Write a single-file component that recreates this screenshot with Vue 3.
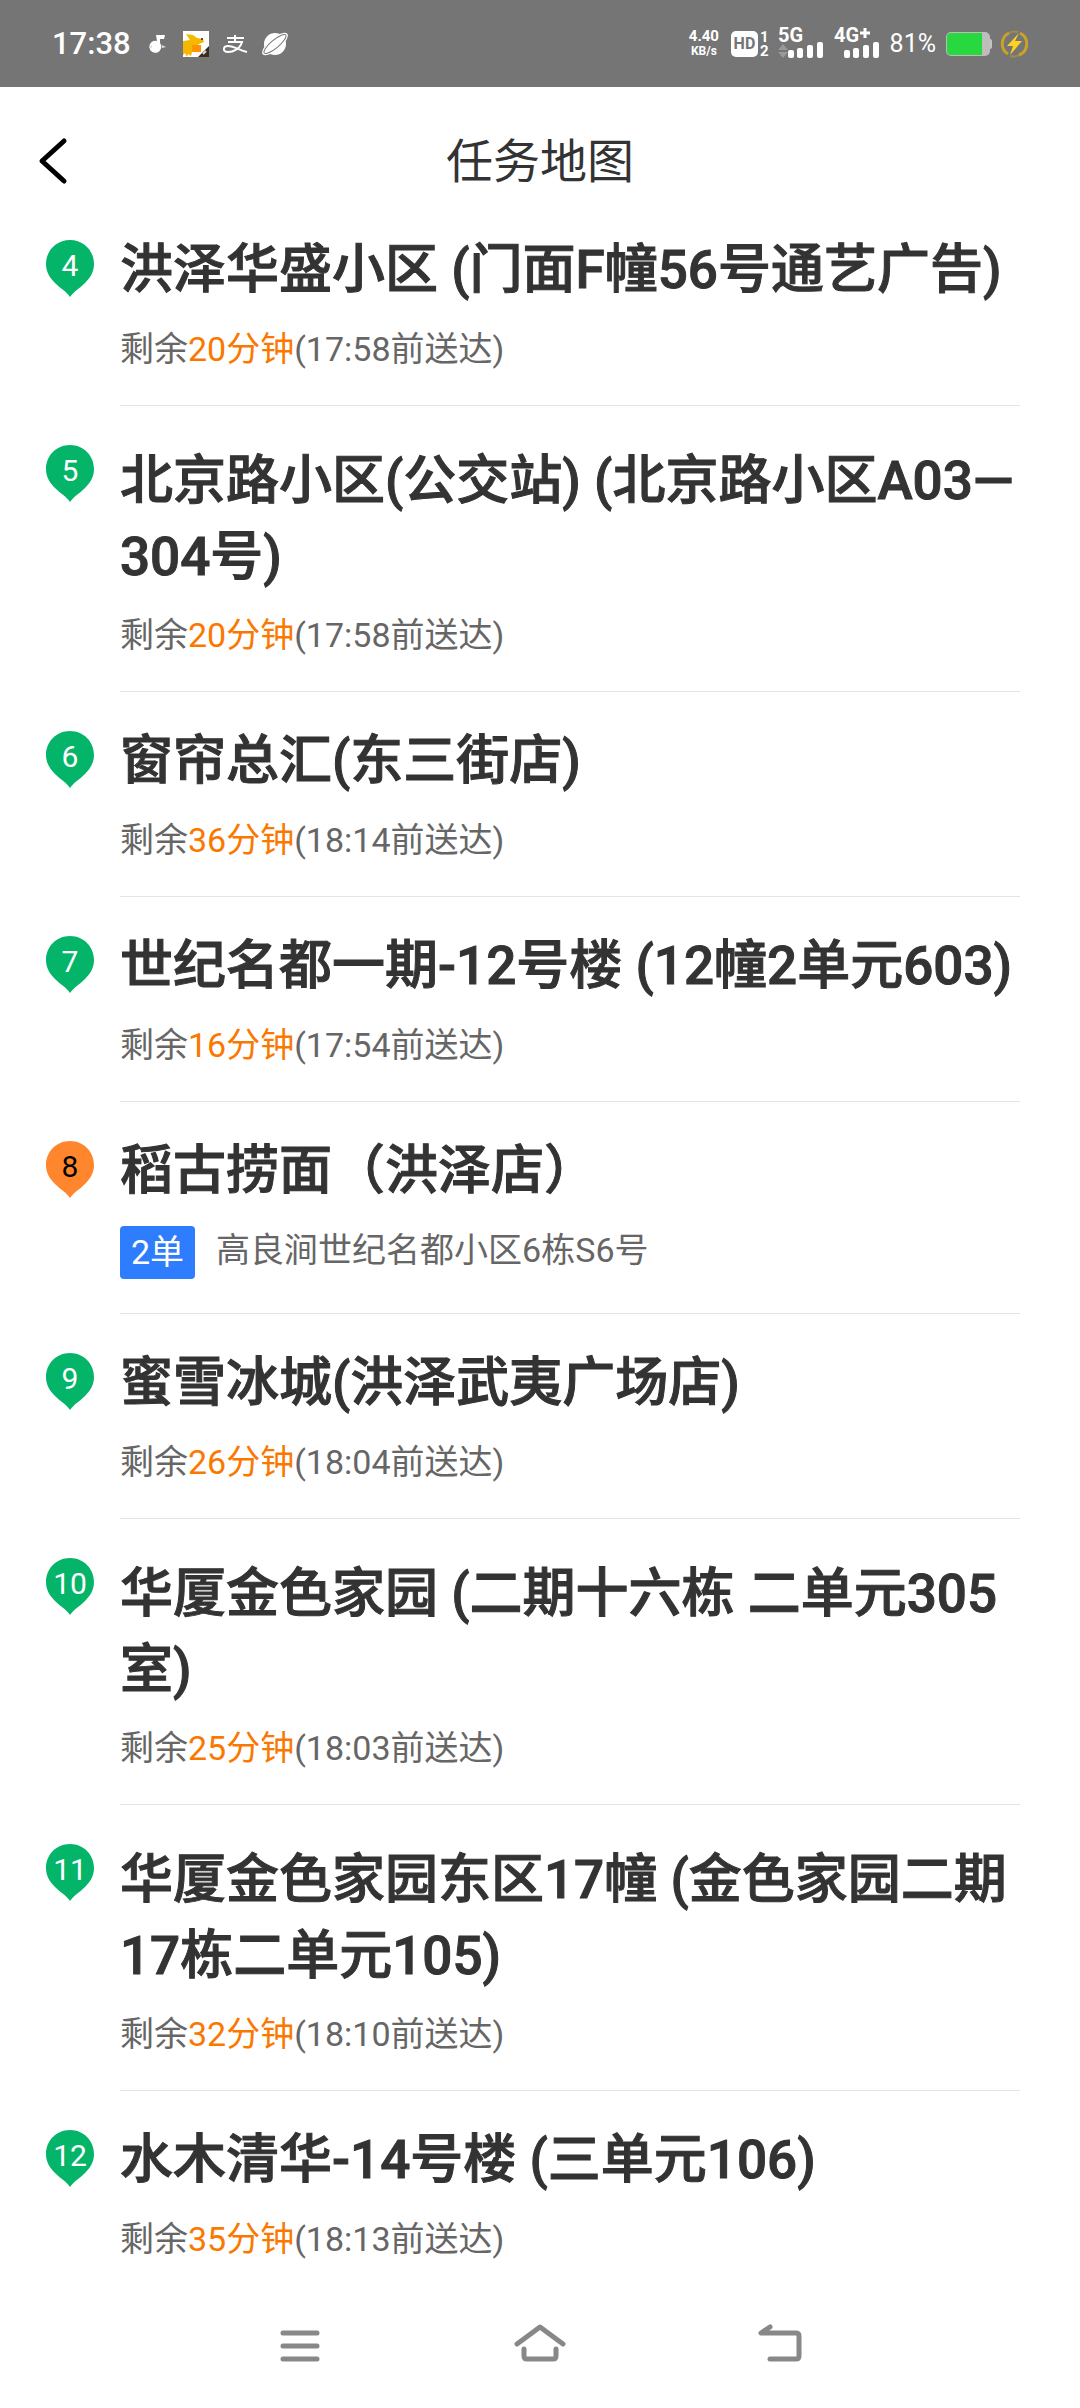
<template>
    <div class="page">
        <div class="status-bar">
            <div class="status-left">
                <span class="clock">17:38</span>
                <svg class="music-icon" width="18" height="20" viewBox="0 0 18 20">
                    <path d="M7 1h9l-1 4h-4v4a6 6 0 1 1-3-2z" fill="#fff" />
                    <path d="M0 13l3-2v3zM13 11l4 2-4 1z" fill="#ddd" />
                </svg>
                <svg class="app-icon" width="26" height="26" viewBox="0 0 26 26">
                    <rect width="26" height="26" fill="#fff" />
                    <path d="M0 10l7-1-4-6 7 1 4 3 6 1 1 3-5 2-3 3v4l-4 1-1 4-3-2-1 3-2-4-2 2z" fill="#f5b800" />
                    <path d="M9 14h9v7H9z" fill="#ff9300" />
                    <path d="M26 15v11H15z" fill="#3c2a1c" />
                    <path d="M20 23l3-3" stroke="#ddd" stroke-width="2" />
                    <circle cx="19" cy="8" r="1" fill="#222" />
                </svg>
                <svg class="pay-icon" width="26" height="20" viewBox="0 0 26 20" fill="none" stroke="#fff" stroke-width="2">
                    <path d="M4 4h17M12 1v7M5 8h14C17 15 10 18 5 18c-6 0-5-6 0-6 6 0 11 4 19 6" />
                </svg>
                <svg width="28" height="26" viewBox="0 0 28 26">
                    <circle cx="14" cy="13" r="11" fill="#fff" />
                    <ellipse cx="14" cy="13" rx="16" ry="6" transform="rotate(-40 14 13)" fill="#fff" />
                    <ellipse cx="14" cy="13" rx="14" ry="4" transform="rotate(-40 14 13)" fill="none" stroke="#757575" stroke-width="1" />
                </svg>
            </div>
            <div class="status-right">
                <div class="speed">
                    <span class="speed-value">4.40</span>
                    <span class="speed-unit">KB/s</span>
                </div>
                <div class="hd">
                    <span class="hd-box">HD</span>
                    <span class="hd-sims"><span>1</span><span>2</span></span>
                </div>
                <svg class="signal" width="46" height="46" viewBox="0 -6 46 46" fill="#fff">
                    <text class="signal-text" x="0" y="15">5G</text>
                    <path d="M0 23l5-6 5 6zM0 25h10l-5 6z" fill="#999" />
                    <rect v-for="bar in bars" :key="bar.x" :x="bar.x" :y="bar.y" width="6" :height="31 - bar.y" rx="2" />
                </svg>
                <svg class="signal" width="46" height="46" viewBox="0 -6 46 46" fill="#fff">
                    <text class="signal-text" x="0" y="15">4G</text>
                    <path d="M26 6h10M31 1v10" stroke="#fff" stroke-width="3" />
                    <rect v-for="bar in bars" :key="bar.x" :x="bar.x" :y="bar.y" width="6" :height="31 - bar.y" rx="2" />
                </svg>
                <span class="percent">81%</span>
                <svg class="battery" width="48" height="26" viewBox="0 0 48 26">
                    <path d="M43 8h2a2 2 0 0 1 2 2v6a2 2 0 0 1-2 2h-2z" fill="#c4c4c4" />
                    <rect x="1" y="1" width="44" height="24" rx="5" fill="#bdbdbd" />
                    <path d="M6 2h31v22H6a4 4 0 0 1-4-4V6a4 4 0 0 1 4-4z" fill="#27d93f" />
                </svg>
                <svg width="28" height="28" viewBox="0 0 28 28">
                    <path d="M9 3a12 12 0 0 0-1 21M19 25a12 12 0 0 0 1-22" fill="none" stroke="#c9a227" stroke-width="3" />
                    <path d="M9 3a12 12 0 0 1 9-1M10 26a12 12 0 0 0 9-1" fill="none" stroke="#a18b45" stroke-width="2" />
                    <path d="M19 3L7 16h6l-3 9 12-14h-7z" fill="#ffd21f" />
                </svg>
            </div>
        </div>

        <header class="header">
            <button class="back-button" type="button" aria-label="返回">
                <svg width="32" height="50" viewBox="0 0 32 50" fill="none" stroke="#000" stroke-width="5" stroke-linecap="round" stroke-linejoin="round">
                    <path d="M28 4L6 24l22 20" />
                </svg>
            </button>
            <h1 class="header-title">任务地图</h1>
        </header>

        <ul class="task-list">
            <li v-for="task in tasks" :key="task.no" class="task">
                <div class="pin" :class="{ pickup: task.count }">
                    <svg class="pin-shape" width="48" height="58" viewBox="0 0 48 58">
                        <path d="M24 0C10 0 0 11 0 24c0 8 4 14 9 19 6 6 11 8 15 14 4-6 9-8 15-14 5-5 9-11 9-19C48 11 38 0 24 0z" />
                    </svg>
                    <span class="pin-no">{{ task.no }}</span>
                </div>
                <div class="task-body">
                    <h2 class="task-title" :class="{ long: task.long }">{{ task.title }}</h2>
                    <div v-if="task.count" class="shop">
                        <span class="badge">{{ task.count }}单</span>
                        <span>{{ task.address }}</span>
                    </div>
                    <p v-else class="remain">剩余<span class="minutes">{{ task.left }}分钟</span>({{ task.time }}前送达)</p>
                </div>
            </li>
        </ul>

        <nav class="nav-bar">
            <button class="nav-button" type="button" aria-label="菜单">
                <svg width="52" height="44" viewBox="0 0 52 44">
                    <path d="M9 10h34M9 23h34M9 36h34" />
                </svg>
            </button>
            <button class="nav-button" type="button" aria-label="主页">
                <svg width="52" height="44" viewBox="0 0 52 44">
                    <path d="M3 21L26 4l23 17" />
                    <path d="M10 26v7q0 3 3 3h26q3 0 3-3v-7" />
                </svg>
            </button>
            <button class="nav-button" type="button" aria-label="返回上一页">
                <svg width="52" height="44" viewBox="0 0 52 44">
                    <path d="M16 4L7 10h35q3 0 3 3v20q0 3-3 3H16" />
                </svg>
            </button>
        </nav>
    </div>
</template>

<script setup>
const bars = [
    { x: 10, y: 23 },
    { x: 19, y: 21 },
    { x: 29, y: 18 },
    { x: 39, y: 15 },
];

// long: the title takes two lines
const tasks = [
    { no: 4, title: '洪泽华盛小区 (门面F幢56号通艺广告)', left: 20, time: '17:58' },
    { no: 5, title: '北京路小区(公交站) (北京路小区A03—304号)', left: 20, time: '17:58', long: true },
    { no: 6, title: '窗帘总汇(东三街店)', left: 36, time: '18:14' },
    { no: 7, title: '世纪名都一期-12号楼 (12幢2单元603)', left: 16, time: '17:54' },
    { no: 8, title: '稻古捞面（洪泽店）', count: 2, address: '高良涧世纪名都小区6栋S6号' },
    { no: 9, title: '蜜雪冰城(洪泽武夷广场店)', left: 26, time: '18:04' },
    { no: 10, title: '华厦金色家园 (二期十六栋 二单元305室)', left: 25, time: '18:03', long: true },
    { no: 11, title: '华厦金色家园东区17幢 (金色家园二期17栋二单元105)', left: 32, time: '18:10', long: true },
    { no: 12, title: '水木清华-14号楼 (三单元106)', left: 35, time: '18:13' },
];
</script>

<style>
body {
    background: #fff;
}
</style>

<style scoped>
.page {
    font-family: Roboto, "Noto Sans CJK SC", sans-serif;
    color: #333;
}

.page * {
    box-sizing: border-box;
}

button {
    border: 0;
    padding: 0;
    background: none;
    cursor: pointer;
}

svg {
    display: block;
    flex-shrink: 0;
}

.status-bar {
    display: flex;
    align-items: center;
    justify-content: space-between;
    height: 87px;
    padding: 0 52px;
    background: #757575;
    color: #fff;
}

.status-left,
.status-right {
    display: flex;
    align-items: center;
}

.clock {
    margin-right: 18px;
    font-size: 31px;
    font-weight: 500;
}

.music-icon {
    margin-right: 16px;
}

.app-icon {
    margin-right: 14px;
}

.pay-icon {
    margin-right: 12px;
}

.speed {
    display: flex;
    flex-direction: column;
    align-items: center;
    margin-right: 12px;
    font-weight: 700;
}

.speed-value {
    font-size: 15px;
    line-height: 15px;
}

.speed-unit {
    font-size: 12px;
    line-height: 14px;
}

.hd {
    display: flex;
    align-items: center;
    gap: 2px;
    margin-right: 9px;
    font-weight: 700;
}

.hd-box {
    width: 27px;
    border-radius: 5px;
    background: #fff;
    color: #757575;
    font-size: 16px;
    line-height: 26px;
    text-align: center;
}

.hd-sims {
    display: flex;
    flex-direction: column;
    font-size: 15px;
    line-height: 14px;
}

.signal {
    margin-right: 10px;
}

.signal-text {
    font-size: 20px;
    font-weight: 700;
}

.percent {
    margin-right: 9px;
    font-size: 25px;
}

.battery {
    margin-right: 7px;
}

.header {
    display: grid;
    grid-template-columns: 60px 1fr 60px;
    align-items: center;
    padding: 36px 36px 0;
}

.back-button {
    justify-self: start;
}

.header-title {
    margin: 0;
    font-size: 47px;
    font-weight: 400;
    line-height: 78px;
    text-align: center;
}

.task-list {
    margin: 0;
    padding: 0 60px 0 46px;
    list-style: none;
}

.task {
    display: flex;
    gap: 26px;
}

.pin {
    display: grid;
    flex-shrink: 0;
    align-self: flex-start;
    margin-top: 39px;
    color: #fff;
    fill: #04b569;
}

.pin.pickup {
    color: #000;
    fill: #ff862d;
}

.pin-shape,
.pin-no {
    grid-area: 1 / 1;
}

.pin-no {
    font-size: 30px;
    line-height: 52px;
    text-align: center;
}

.task-body {
    flex: 1;
    padding: 33px 0 32px;
    border-bottom: 1px solid #e4e4e4;
}

.task:last-child .task-body {
    border-bottom: 0;
}

.task-title {
    margin: 0 0 19px;
    font-size: 53px;
    font-weight: 500;
    line-height: 72px;
    -webkit-text-stroke: 1px #333;
}

.task-title.long {
    margin-bottom: 16px;
    padding-top: 4px;
    line-height: 76px;
}

.remain,
.shop {
    margin: 0;
    color: #666;
    font-size: 34px;
    line-height: 48px;
}

.minutes {
    color: #fa7800;
}

.shop {
    display: flex;
    align-items: flex-start;
    gap: 21px;
    padding-bottom: 2px;
}

.badge {
    padding: 0 11px;
    border-radius: 4px;
    background: #2f7dff;
    color: #fff;
    line-height: 53px;
}

.nav-bar {
    display: grid;
    grid-template-columns: repeat(3, 1fr);
    padding: 28px 16.6667% 42px;
}

.nav-button {
    display: flex;
    justify-content: center;
    fill: none;
    stroke: #888;
    stroke-width: 5;
    stroke-linecap: round;
    stroke-linejoin: round;
}
</style>
